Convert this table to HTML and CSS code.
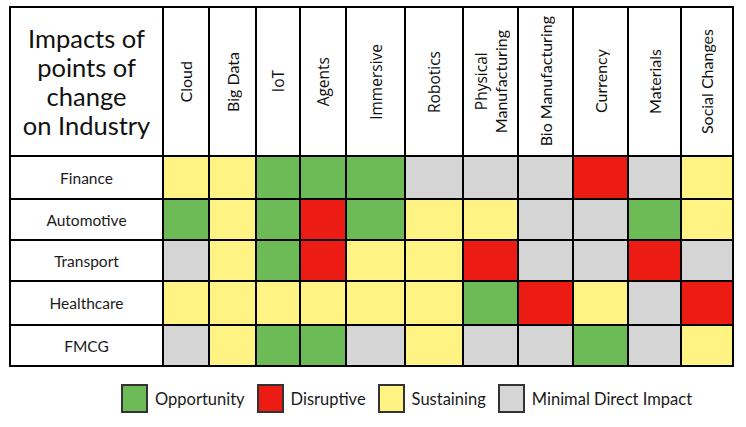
FILE: index.html
```html
<!DOCTYPE html>
<html>
<head>
<meta charset="utf-8">
<link rel="stylesheet" href="styles.css">
</head>
<body>
<div class="page">
  <table class="matrix">
    <colgroup>
      <col class="c-label">
      <col class="c46"><col class="c47"><col class="c44"><col class="c46">
      <col class="c59"><col class="c58"><col class="c55"><col class="c55">
      <col class="c55"><col class="c53"><col class="c52">
    </colgroup>
    <thead>
      <tr class="head-row">
        <th class="title">Impacts of<br>points of<br>change<br>on Industry</th>
        <th><div class="hcell"><span class="vert">Cloud</span></div></th>
        <th><div class="hcell"><span class="vert">Big Data</span></div></th>
        <th><div class="hcell"><span class="vert cal">IoT</span></div></th>
        <th><div class="hcell"><span class="vert cal">Agents</span></div></th>
        <th><div class="hcell"><span class="vert cal">Immersive</span></div></th>
        <th><div class="hcell"><span class="vert cal">Robotics</span></div></th>
        <th><div class="hcell"><span class="vert"><span class="cal">Physical</span><br>Manufacturing</span></div></th>
        <th><div class="hcell"><span class="vert">Bio Manufacturing</span></div></th>
        <th><div class="hcell"><span class="vert">Currency</span></div></th>
        <th><div class="hcell"><span class="vert">Materials</span></div></th>
        <th><div class="hcell"><span class="vert">Social Changes</span></div></th>
      </tr>
    </thead>
    <tbody>
      <tr class="r43">
        <td class="label">Finance</td>
        <td class="y"></td><td class="y"></td><td class="g"></td><td class="g"></td><td class="g"></td><td class="n"></td><td class="n"></td><td class="n"></td><td class="r"></td><td class="n"></td><td class="y"></td>
      </tr>
      <tr class="r41">
        <td class="label">Automotive</td>
        <td class="g"></td><td class="y"></td><td class="g"></td><td class="r"></td><td class="g"></td><td class="y"></td><td class="y"></td><td class="n"></td><td class="n"></td><td class="g"></td><td class="y"></td>
      </tr>
      <tr class="r41">
        <td class="label">Transport</td>
        <td class="n"></td><td class="y"></td><td class="g"></td><td class="r"></td><td class="y"></td><td class="y"></td><td class="r"></td><td class="n"></td><td class="n"></td><td class="r"></td><td class="n"></td>
      </tr>
      <tr class="r44">
        <td class="label">Healthcare</td>
        <td class="y"></td><td class="y"></td><td class="y"></td><td class="y"></td><td class="y"></td><td class="y"></td><td class="g"></td><td class="r"></td><td class="y"></td><td class="n"></td><td class="r"></td>
      </tr>
      <tr class="r41">
        <td class="label">FMCG</td>
        <td class="n"></td><td class="y"></td><td class="g"></td><td class="g"></td><td class="n"></td><td class="y"></td><td class="n"></td><td class="n"></td><td class="g"></td><td class="n"></td><td class="y"></td>
      </tr>
    </tbody>
  </table>

  <div class="legend">
    <div class="item"><span class="swatch g"></span><span class="lt">Opportunity</span></div>
    <div class="item"><span class="swatch r"></span><span class="lt">Disruptive</span></div>
    <div class="item"><span class="swatch y"></span><span class="lt">Sustaining</span></div>
    <div class="item"><span class="swatch n"></span><span class="lt">Minimal Direct Impact</span></div>
  </div>
</div>
</body>
</html>
```

FILE: styles.css
```css
html, body {
  margin: 0;
  padding: 0;
  background: #ffffff;
}

.page {
  width: 746px;
  height: 427px;
  padding: 6px 0 0 9px;
  box-sizing: border-box;
  font-family: "Lato", "Open Sans", sans-serif;
  color: #1a1a1a;
}

.matrix {
  border-collapse: collapse;
  table-layout: fixed;
  width: 725px;
}

.matrix th,
.matrix td {
  border: 2px solid #000;
  padding: 0;
  text-align: center;
  vertical-align: middle;
}

.c-label { width: 153px; }
.c44 { width: 44px; }
.c46 { width: 46px; }
.c47 { width: 47px; }
.c52 { width: 52px; }
.c53 { width: 53px; }
.c55 { width: 55px; }
.c58 { width: 58px; }
.c59 { width: 59px; }

.head-row { height: 149px; }
.r41 { height: 41px; }
.r43 { height: 43px; }
.r44 { height: 44px; }

.title {
  font-weight: normal;
  font-size: 25.5px;
  line-height: 29px;
  color: #111;
}

.matrix th {
  font-weight: normal;
}

.hcell {
  height: 147px;
  display: flex;
  align-items: center;
  justify-content: center;
}

.vert {
  display: block;
  writing-mode: vertical-rl;
  transform: rotate(180deg);
  font-size: 16px;
  line-height: 20px;
  white-space: nowrap;
  color: #111;
}

.cal {
  font-family: "Open Sans", "Lato", sans-serif;
  font-size: 15.5px;
}

.label {
  font-size: 15.5px;
  color: #1a1a1a;
}

.g { background: #6dbb57; }
.r { background: #ec1b13; }
.y { background: #fef383; }
.n { background: #d5d5d5; }

.legend {
  display: flex;
  align-items: center;
  gap: 12px;
  margin: 17px 0 0 112px;
}

.item {
  display: flex;
  align-items: center;
  gap: 7px;
}

.swatch {
  display: block;
  width: 23px;
  height: 25px;
  border: 2px solid #333;
}

.lt {
  font-size: 16.5px;
  color: #1a1a1a;
}
```
